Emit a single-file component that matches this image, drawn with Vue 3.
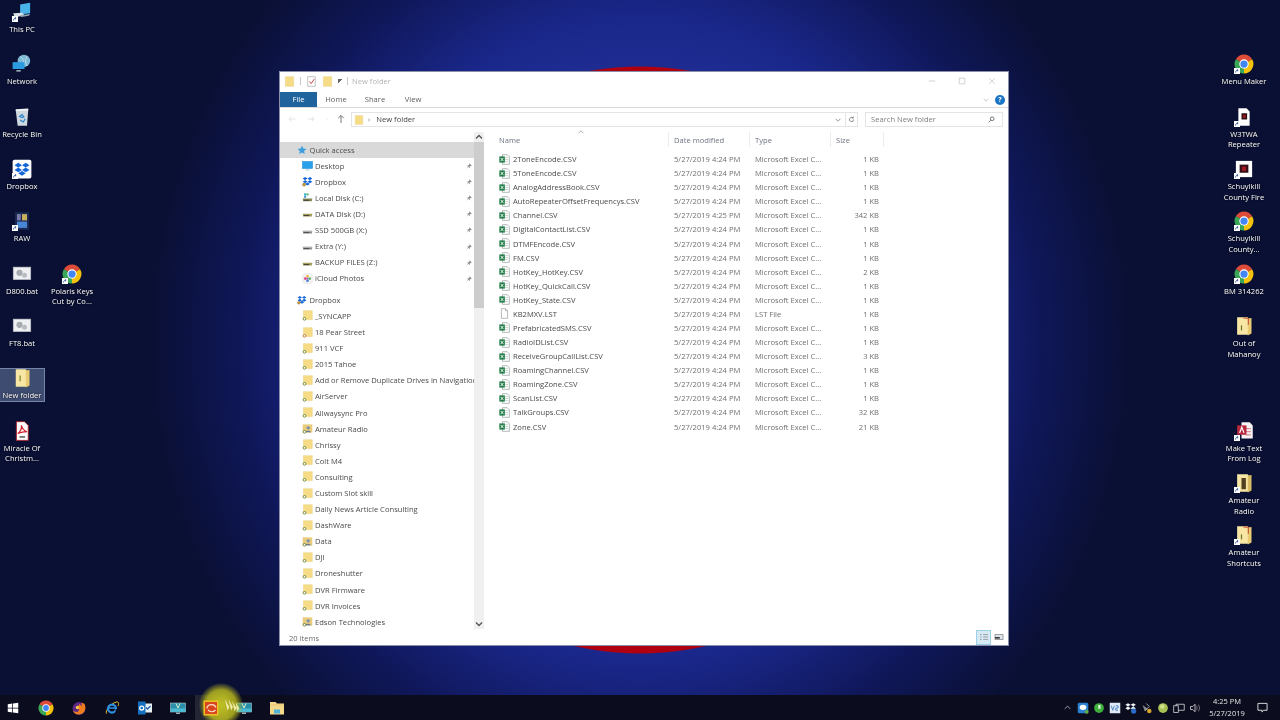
<template>
  <div class="desktop">
    <svg class="defs" aria-hidden="true">
      <symbol id="xl" viewBox="0 0 16 16">
        <path d="M5 1h7l3 3v11H5z" fill="#fff" stroke="#8f9a96" />
        <path d="M9 5h4M9 8h4M9 11h4" stroke="#b5c4bb" />
        <rect x="0.5" y="3.5" width="8" height="9" fill="#1d7a45" />
        <path d="M2.400 5.600l4.200 4.800M6.600 5.600l-4.200 4.800" stroke="#fff" stroke-width="1.300" />
      </symbol>
      <symbol id="blank" viewBox="0 0 16 16">
        <path d="M3.500 1h6l3 3v11h-9z" fill="#fff" stroke="#9a9a9a" />
        <path d="M9.500 1v3h3" fill="none" stroke="#9a9a9a" />
      </symbol>
      <symbol id="props" viewBox="0 0 16 16">
        <path d="M2.500 1h11v14h-11z" fill="#fff" stroke="#a8a8a8" />
        <path d="M5 8l2.500 3L12 4.500" fill="none" stroke="#c8343c" stroke-width="1.300" />
      </symbol>
      <symbol id="tfolder" viewBox="0 0 16 16">
        <path d="M2 1h12v14H2z" fill="#f6dc86" stroke="#e6cb78" stroke-width=".6" />
      </symbol>
      <symbol id="sfolder" viewBox="0 0 16 16">
        <path d="M2 1h13v13H2z" fill="#f6dc86" stroke="#e6cb78" stroke-width=".6" />
        <circle cx="3.600" cy="12.800" r="2" fill="#fff" stroke="#5f7d2b" stroke-width="1.200" />
      </symbol>
      <symbol id="ofolder" viewBox="0 0 16 16">
        <path d="M2 1h13v13H2z" fill="#f6dc86" stroke="#e6cb78" stroke-width=".6" />
        <circle cx="3.600" cy="12.800" r="2" fill="#fff" stroke="#b06a28" stroke-width="1.200" />
      </symbol>
      <symbol id="pfolder" viewBox="0 0 16 16">
        <path d="M1 2h14v12H1z" fill="#e8cc7c" />
        <circle cx="9" cy="7" r="2.400" fill="#7d8fb0" />
        <path d="M5 13.500c.6-3 7-3 8 0z" fill="#64769a" />
        <circle cx="3.600" cy="12.800" r="2" fill="#fff" stroke="#5f7d2b" stroke-width="1.200" />
      </symbol>
      <symbol id="star" viewBox="0 0 16 16">
        <path d="M8 1l2.100 4.700 5 .5-3.800 3.300 1.100 5L8 11.900l-4.400 2.600 1.100-5L.9 6.200l5-.5z" fill="#3c9ddc" />
      </symbol>
      <symbol id="screen" viewBox="0 0 16 16">
        <rect x="0.500" y="2" width="15" height="10.500" fill="#2aa0ea" stroke="#1d84c8" stroke-width=".6" />
        <path d="M5 14.500h6" stroke="#7fb2d2" />
      </symbol>
      <symbol id="dropboxnav" viewBox="0 0 32 32">
        <path d="M9 3l7 4.600-7 4.600-7-4.600zM23 3l7 4.600-7 4.600-7-4.600zM9 12.200l7 4.600-7 4.600-7-4.600zM23 12.200l7 4.600-7 4.600-7-4.600zM16 18.600l7 4.600-7 4.600-7-4.600z" fill="#1467d8" />
        <circle cx="6" cy="25" r="4.600" fill="#c89a3c" stroke="#6f5a22" />
      </symbol>
      <symbol id="drive" viewBox="0 0 16 16">
        <path d="M1 8.500h14l-.6 4H1.600z" fill="#8d8d8d" />
        <path d="M1.600 9h12.800" stroke="#d8d8d8" />
        <path d="M2.500 11h8" stroke="#444" stroke-width="1.300" />
      </symbol>
      <symbol id="sysdrive" viewBox="0 0 16 16">
        <rect x="3" y="2" width="3" height="3" fill="#2db2cf" />
        <rect x="6.500" y="2" width="3" height="3" fill="#4fb56d" />
        <rect x="3" y="5.400" width="3" height="3" fill="#3a94d6" />
        <path d="M1 9.500h14l-.6 4H1.600z" fill="#8a8a5a" />
        <path d="M2.500 12h8" stroke="#333" stroke-width="1.300" />
      </symbol>
      <symbol id="ydrive" viewBox="0 0 16 16">
        <path d="M1 8.500h14l-.6 4H1.600z" fill="#a39c5a" />
        <path d="M2.500 11h8" stroke="#333" stroke-width="1.300" />
      </symbol>
      <symbol id="icloud" viewBox="0 0 16 16">
        <rect x="1" y="1" width="14" height="14" rx="3" fill="#f4f4f6" stroke="#c9c9cf" stroke-width=".5" />
        <circle cx="8" cy="4.800" r="2" fill="#f0b43a" />
        <circle cx="11.200" cy="8" r="2" fill="#5cb85c" />
        <circle cx="8" cy="11.200" r="2" fill="#4a7fd6" />
        <circle cx="4.800" cy="8" r="2" fill="#d6487e" />
        <circle cx="8" cy="8" r="1.400" fill="#a76ad0" />
      </symbol>
      <symbol id="pin" viewBox="0 0 16 16">
        <path d="M9.500 1.500l5 5-2 .6-2.700 2.700-.4 3-5.700-5.700 3-.4 2.700-2.700zM5 11l-3.500 3.500" fill="#8a8a8a" stroke="#8a8a8a" />
      </symbol>
      <symbol id="chrome" viewBox="0 0 32 32">
        <path d="M16 16L3 8.500A15 15 0 0 1 29 8.500z" fill="#dd4b39" />
        <path d="M16 16L29 8.500A15 15 0 0 1 16 31z" fill="#f4c20d" />
        <path d="M16 16L16 31A15 15 0 0 1 3 8.500z" fill="#3aa757" />
        <circle cx="16" cy="16" r="7.500" fill="#fff" />
        <circle cx="16" cy="16" r="5.800" fill="#4285f4" />
      </symbol>
      <symbol id="thispc" viewBox="0 0 32 32">
        <path d="M13 4l16-3v17l-16 2z" fill="#49b4ea" />
        <path d="M2 18l14-1 5 5-17 2z" fill="#d9dfe4" />
        <path d="M13 21l16-2-2 3-12 2z" fill="#8fa7b6" />
      </symbol>
      <symbol id="network" viewBox="0 0 32 32">
        <circle cx="19" cy="11" r="10" fill="#7db9d6" />
        <path d="M13 4c4 2 8 9 5 16M24 3c-3 5-3 12 0 16" stroke="#d6ecf5" fill="none" />
        <path d="M1 13h19v11H1z" fill="#2c9be0" />
        <path d="M7 27h7" stroke="#c9d9e2" stroke-width="2" />
      </symbol>
      <symbol id="bin" viewBox="0 0 32 32">
        <path d="M6 5l20-1-2 26H9z" fill="#cfd8df" />
        <path d="M6 5l20-1" stroke="#f1f4f6" stroke-width="3" />
        <path d="M12 15l4-3 3 4-3 1zM13 21l5 3 3-5" fill="none" stroke="#2f86cc" stroke-width="2" />
      </symbol>
      <symbol id="dbox" viewBox="0 0 32 32">
        <rect x="1" y="1" width="30" height="30" rx="3" fill="#fff" />
        <path d="M10 6l6 3.800-6 3.800-6-3.800zM22 6l6 3.800-6 3.800-6-3.800zM10 13.700l6 3.800-6 3.800-6-3.800zM22 13.700l6 3.800-6 3.800-6-3.800zM16 19l6 3.800-6 3.800-6-3.800z" fill="#1467d8" />
      </symbol>
      <symbol id="raw" viewBox="0 0 32 32">
        <rect x="5" y="2" width="22" height="28" fill="#1d2a55" />
        <rect x="8" y="5" width="6" height="10" fill="#7a7aa8" />
        <rect x="16" y="5" width="8" height="10" fill="#c8b05a" />
        <rect x="8" y="17" width="16" height="10" fill="#4a86d6" />
      </symbol>
      <symbol id="bat" viewBox="0 0 32 32">
        <rect x="2" y="5" width="28" height="20" fill="#eef0f2" stroke="#b9bec4" />
        <circle cx="12" cy="14" r="5" fill="#a7abaf" />
        <circle cx="20" cy="18" r="4" fill="#b9bdc1" />
      </symbol>
      <symbol id="opened" viewBox="0 0 32 32">
        <path d="M6 2h16l2 3v25H6z" fill="#f7e6a4" />
        <path d="M22 4l6-1v25l-6 3z" fill="#e8cb73" />
        <path d="M13 12v9" stroke="#7f8a2a" stroke-width="2" />
      </symbol>
      <symbol id="redfolder" viewBox="0 0 32 32">
        <path d="M5 2h17l2 3v25H5z" fill="#f7e6a4" />
        <path d="M22 4l6-1v25l-6 3z" fill="#e8cb73" />
        <path d="M15 3l8 1v10" stroke="#c9603c" stroke-width="2" fill="none" />
        <path d="M12 15v8" stroke="#6e7a2a" stroke-width="2" />
      </symbol>
      <symbol id="darkfolder" viewBox="0 0 32 32">
        <path d="M5 2h17l2 3v25H5z" fill="#f7e6a4" />
        <path d="M22 4l6-1v25l-6 3z" fill="#d9bb66" />
        <path d="M12 8h7v18h-7z" fill="#50401f" />
      </symbol>
      <symbol id="page" viewBox="0 0 32 32">
        <path d="M7 2h13l5 5v23H7z" fill="#fff" />
        <rect x="12" y="10" width="9" height="10" fill="#301015" />
        <rect x="14.500" y="12.500" width="4" height="5" fill="#a01824" />
      </symbol>
      <symbol id="square" viewBox="0 0 32 32">
        <rect x="3" y="3" width="26" height="26" fill="#fff" />
        <rect x="9" y="9" width="14" height="13" fill="#301015" />
        <rect x="12.500" y="12" width="7" height="7" fill="#a01824" />
      </symbol>
      <symbol id="pdf" viewBox="0 0 32 32">
        <path d="M7 1h13l6 6v24H7z" fill="#fff" stroke="#a3202c" stroke-width="1.500" />
        <path d="M9 20c5-3 7-9 6-13 2 6 4 9 9 10-5 0-10 1-15 3z" fill="none" stroke="#d3202c" stroke-width="2" />
        <rect x="12" y="24" width="9" height="3" fill="#777" />
      </symbol>
      <symbol id="acc" viewBox="0 0 32 32">
        <path d="M12 2h13l5 5v21H12z" fill="#f7f2f3" />
        <path d="M19 12h8M19 17h8M19 22h8" stroke="#d98b96" stroke-width="2" />
        <rect x="5" y="7" width="15" height="15" fill="#b8283e" />
        <path d="M9 19l3.500-9 3.500 9" stroke="#fff" stroke-width="2" fill="none" />
      </symbol>
      <symbol id="shortcut" viewBox="0 0 8 8">
        <rect width="8" height="8" fill="#fff" />
        <path d="M2 6c0-2 1-3 3-3M3.800 1.500L5.500 3 3.800 4.500" stroke="#1b3f8a" fill="none" />
      </symbol>
      <symbol id="windows" viewBox="0 0 16 16">
        <path d="M1 3l6-.9V7.500H1zM8 2l7-1v6.500H8zM1 8.500h6v5.400l-6-.9zM8 8.500h7V15l-7-1z" fill="#fff" />
      </symbol>
      <symbol id="firefox" viewBox="0 0 32 32">
        <circle cx="16" cy="17" r="13" fill="#5a2a86" />
        <path d="M27 8c4 8 1 20-10 21-7 .5-12-3-13-8 3 3 8 4 11 1 2-2 1-5-2-5 0-3 3-5 3-9 3 1 4 3 5 5 1-2 0-5 0-7 3 0 5 1 6 2z" fill="#ef7b1f" />
        <circle cx="13" cy="15" r="3.500" fill="#f6c344" />
      </symbol>
      <symbol id="ie" viewBox="0 0 32 32">
        <path d="M5 27C2 21 13 7 25 4c5-1 5 4 3 8" fill="none" stroke="#f2c230" stroke-width="2" />
        <circle cx="16" cy="17" r="8" fill="none" stroke="#2f8fe0" stroke-width="4.500" />
        <path d="M9 16h15" stroke="#2f8fe0" stroke-width="3" />
        <path d="M23 21h3" stroke="#0b0c20" stroke-width="5" />
      </symbol>
      <symbol id="outlook" viewBox="0 0 32 32">
        <rect x="15" y="7" width="15" height="18" fill="#e6eef6" />
        <path d="M18 15l3 3 6-6" stroke="#1d5fa8" stroke-width="2.500" fill="none" />
        <rect x="2" y="3" width="15" height="26" fill="#1470bd" />
        <circle cx="9.500" cy="16" r="4" fill="none" stroke="#fff" stroke-width="2.500" />
      </symbol>
      <symbol id="monitor" viewBox="0 0 32 32">
        <rect x="1" y="6" width="30" height="18" fill="#2a8fa8" stroke="#c8dce2" />
        <path d="M1 17h30v7H1z" fill="#4fb9d0" />
        <path d="M12 7l4 9 4-9" stroke="#d9f0d0" stroke-width="2" fill="none" />
        <path d="M12 25h8v3h-8z" fill="#9ab3bb" />
      </symbol>
      <symbol id="orange" viewBox="0 0 32 32">
        <rect x="1" y="1" width="30" height="30" fill="#f0c020" />
        <rect x="4" y="4" width="24" height="24" fill="#d8451e" />
        <path d="M8 17c0-9 15-11 18-2M10 20c4 4 10 5 15 0" stroke="#f8e0c8" stroke-width="2.500" fill="none" />
      </symbol>
      <symbol id="explorer" viewBox="0 0 32 32">
        <path d="M2 4h11l3 3h14v22H2z" fill="#f5d98a" />
        <path d="M2 10h28" stroke="#d8b560" />
        <rect x="10" y="19" width="12" height="8" fill="#4fb2d6" />
      </symbol>
      <symbol id="trayblue" viewBox="0 0 16 16">
        <rect x="1" y="1" width="14" height="14" rx="2" fill="#2a80d0" />
        <path d="M3.500 7a4.500 3.500 0 0 1 9 0 4.500 3.500 0 0 1-9 0" fill="#fff" />
        <circle cx="13" cy="13" r="2.500" fill="#62b23c" />
      </symbol>
      <symbol id="traygreen" viewBox="0 0 16 16">
        <circle cx="8" cy="8" r="6.500" fill="#3fae3a" />
        <path d="M7 4h3v5H7z" fill="#e6f6e0" />
      </symbol>
      <symbol id="trayv" viewBox="0 0 16 16">
        <rect x="1" y="1" width="14" height="14" fill="#dfe9f5" />
        <path d="M3 5l2 6 2-6M9 5h3v3H9v3h3" stroke="#2a6cb8" fill="none" />
      </symbol>
      <symbol id="traydrop" viewBox="0 0 32 32">
        <path d="M8 3l7 4.600-7 4.600-7-4.600zM22 3l7 4.600-7 4.600-7-4.600zM8 12.200l7 4.600-7 4.600-7-4.600zM22 12.200l7 4.600-7 4.600-7-4.600z" fill="#eef2f6" />
        <circle cx="23" cy="24" r="7" fill="#2a6cc8" />
      </symbol>
      <symbol id="traysat" viewBox="0 0 16 16">
        <path d="M2 4l7 5-4 3z" fill="#8a8a8a" />
        <path d="M7 2l4 4-6 6" stroke="#ccc" fill="none" />
        <circle cx="11" cy="12" r="3" fill="#d8a42c" />
      </symbol>
      <symbol id="traylime" viewBox="0 0 16 16">
        <circle cx="8" cy="8" r="6.500" fill="#a9c255" />
        <circle cx="7" cy="6" r="3" fill="#d2e08c" />
      </symbol>
      <symbol id="traynet" viewBox="0 0 16 16">
        <path d="M4 3h11v8H4z" fill="none" stroke="#e5e5e5" />
        <rect x="1" y="5" width="6" height="9" fill="#0b0c20" stroke="#e5e5e5" />
      </symbol>
      <symbol id="traysound" viewBox="0 0 16 16">
        <path d="M2 6h3l3-3v10l-3-3H2z" fill="none" stroke="#e5e5e5" />
        <path d="M10 5c1 2 1 4 0 6M12.500 3.500c2 3 2 6 0 9" stroke="#8f8f8f" fill="none" />
      </symbol>
    </svg>

    <div v-for="item in desktopIcons" :key="item.label" class="desk-icon" :class="{ 'desk-icon--selected': item.selected }" :style="deskStyle(item)">
      <span class="desk-icon__art">
        <svg class="desk-icon__svg"><use :href="`#${item.icon}`" /></svg>
        <svg v-if="item.link" class="desk-icon__link"><use href="#shortcut" /></svg>
      </span>
      <span class="desk-icon__label">{{ item.label }}</span>
    </div>

    <section class="window">
      <header class="titlebar">
        <svg class="tb-ic"><use href="#tfolder" /></svg>
        <span class="tb-sep"></span>
        <svg class="tb-ic"><use href="#props" /></svg>
        <svg class="tb-ic"><use href="#tfolder" /></svg>
        <span class="tb-caret"></span>
        <span class="tb-sep"></span>
        <span class="titlebar__name">New folder</span>
        <div class="controls">
          <svg viewBox="0 0 10 10"><path d="M1 5h8" /></svg>
          <svg viewBox="0 0 10 10"><path d="M1.500 1.500h7v7h-7z" /></svg>
          <svg viewBox="0 0 10 10"><path d="M1.500 1.500l7 7M8.500 1.500l-7 7" /></svg>
        </div>
      </header>

      <nav class="tabs">
        <span class="tabs__file">File</span>
        <span class="tabs__tab tabs__tab--home">Home</span>
        <span class="tabs__tab tabs__tab--share">Share</span>
        <span class="tabs__tab tabs__tab--view">View</span>
        <svg class="tabs__collapse" viewBox="0 0 10 6"><path d="M1 1l4 4 4-4" /></svg>
        <span class="tabs__help">?</span>
      </nav>

      <div class="addressrow">
        <svg class="arrow arrow--back" viewBox="0 0 12 10"><path d="M11 5H2M5 1.500L1.500 5 5 8.500" /></svg>
        <svg class="arrow arrow--forward" viewBox="0 0 12 10"><path d="M1 5h9M7 1.500L10.500 5 7 8.500" /></svg>
        <svg class="caret" viewBox="0 0 10 6"><path d="M2 1.500l3 3 3-3" /></svg>
        <svg class="arrow arrow--up" viewBox="0 0 10 12"><path d="M5 11V2M1.500 5L5 1.500 8.500 5" /></svg>
        <div class="address">
          <svg class="address__ic"><use href="#tfolder" /></svg>
          <span class="address__chev">›</span>
          <span class="address__path">New folder</span>
          <svg class="address__down" viewBox="0 0 10 6"><path d="M1 1l4 4 4-4" /></svg>
          <span class="address__refresh">
            <svg viewBox="0 0 10 10"><path d="M8 5a3 3 0 1 1-1-2.300M7.500 .8v2.200H5.300" /></svg>
          </span>
        </div>
        <div class="search">
          <span class="search__text">Search New folder</span>
          <svg viewBox="0 0 10 10"><circle cx="6" cy="4" r="2.600" /><path d="M4 6L1 9" /></svg>
        </div>
      </div>

      <div class="body">
        <aside class="tree">
          <div v-for="row in treeRows" :key="row.name" class="tree__row" :class="{ 'tree__row--head': row.head, 'tree__row--active': row.active, 'tree__row--gap': row.gap }">
            <svg class="tree__ic"><use :href="`#${row.icon}`" /></svg>
            <span class="tree__name">{{ row.name }}</span>
            <svg v-if="row.pin" class="tree__pin"><use href="#pin" /></svg>
          </div>
        </aside>

        <div class="scrollbar">
          <svg viewBox="0 0 10 10" class="scrollbar__btn"><path d="M2 6.500l3-3 3 3" /></svg>
          <div class="scrollbar__track"><div class="scrollbar__thumb"></div></div>
          <svg viewBox="0 0 10 10" class="scrollbar__btn"><path d="M2 3.500l3 3 3-3" /></svg>
        </div>

        <main class="files">
          <svg class="files__sort" viewBox="0 0 10 5"><path d="M2 4l3-3 3 3" /></svg>
          <div class="files__head">
            <span>Name</span>
            <span>Date modified</span>
            <span>Type</span>
            <span>Size</span>
          </div>
          <div v-for="file in files" :key="file.name" class="files__row">
            <span class="files__name">
              <svg><use :href="file.lst ? '#blank' : '#xl'" /></svg>{{ file.name }}
            </span>
            <span>{{ file.date }}</span>
            <span>{{ file.lst ? 'LST File' : 'Microsoft Excel C...' }}</span>
            <span class="files__size">{{ file.size }}</span>
          </div>
        </main>
      </div>

      <footer class="status">
        <span class="status__count">20 items</span>
        <div class="status__views">
          <span class="status__view status__view--on">
            <svg viewBox="0 0 12 10"><path d="M1 2h2M5 2h6M1 5h2M5 5h6M1 8h2M5 8h6" /></svg>
          </span>
          <span class="status__view">
            <svg viewBox="0 0 12 10"><rect x="1" y="2" width="10" height="6" fill="#dce6ee" /><path d="M1 6h6" stroke="#333" stroke-width="2" /></svg>
          </span>
        </div>
      </footer>
    </section>

    <footer class="taskbar">
      <span v-for="(app, i) in taskApps" :key="i" class="taskbar__app" :class="{ 'taskbar__app--active': app.active }">
        <svg :class="{ 'taskbar__win': app.icon === 'windows' }"><use :href="`#${app.icon}`" /></svg>
      </span>
      <div class="tray">
        <svg class="tray__chev" viewBox="0 0 10 6"><path d="M1 5l4-4 4 4" /></svg>
        <svg v-for="icon in trayIcons" :key="icon" class="tray__ic"><use :href="`#${icon}`" /></svg>
        <div class="clock">
          <span>4:25 PM</span>
          <span>5/27/2019</span>
        </div>
        <svg class="tray__note" viewBox="0 0 12 12"><path d="M1 1.500h10v7.500H7L5.500 11V9H1z" /></svg>
      </div>
    </footer>

    <div class="pointer">
      <svg viewBox="0 0 20 20"><path d="M2 1l3 13 2-4zM6 1l3 13 2-4zM10 3l3 12 2-4zM14 5l2 10 2-4z" fill="#efeba8" /></svg>
    </div>
  </div>
</template>

<script setup>
const ROW = 52.33

const desktopIcons = [
  { col: 22, row: 0, label: 'This PC', icon: 'thispc', link: true },
  { col: 22, row: 1, label: 'Network', icon: 'network' },
  { col: 22, row: 2, label: 'Recycle Bin', icon: 'bin' },
  { col: 22, row: 3, label: 'Dropbox', icon: 'dbox', link: true },
  { col: 22, row: 4, label: 'RAW', icon: 'raw', link: true },
  { col: 22, row: 5, label: 'D800.bat', icon: 'bat' },
  { col: 72, row: 5, label: 'Polaris Keys Cut by Co...', icon: 'chrome', link: true },
  { col: 22, row: 6, label: 'FT8.bat', icon: 'bat' },
  { col: 22, row: 7, label: 'New folder', icon: 'opened', selected: true },
  { col: 22, row: 8, label: 'Miracle Of Christm...', icon: 'pdf' },
  { col: 1244, row: 1, label: 'Menu Maker', icon: 'chrome', link: true },
  { col: 1244, row: 2, label: 'W3TWA Repeater', icon: 'page', link: true },
  { col: 1244, row: 3, label: 'Schuylkill County Fire', icon: 'square', link: true },
  { col: 1244, row: 4, label: 'Schuylkill County...', icon: 'chrome', link: true },
  { col: 1244, row: 5, label: 'BM 314262', icon: 'chrome', link: true },
  { col: 1244, row: 6, label: 'Out of Mahanoy', icon: 'redfolder' },
  { col: 1244, row: 8, label: 'Make Text From Log', icon: 'acc', link: true },
  { col: 1244, row: 9, label: 'Amateur Radio', icon: 'darkfolder', link: true },
  { col: 1244, row: 10, label: 'Amateur Shortcuts', icon: 'redfolder', link: true },
]

function deskStyle(item) {
  return { left: `${item.col - 24}px`, top: `${2 + item.row * ROW}px` }
}

const dropboxFolders = [
  ['_SYNCAPP', 'sfolder'], ['18 Pear Street', 'ofolder'], ['911 VCF', 'sfolder'], ['2015 Tahoe', 'sfolder'],
  ['Add or Remove Duplicate Drives in Navigation', 'sfolder'], ['AirServer', 'sfolder'], ['Allwaysync Pro', 'sfolder'],
  ['Amateur Radio', 'pfolder'], ['Chrissy', 'sfolder'], ['Colt M4', 'sfolder'], ['Consulting', 'sfolder'],
  ['Custom Slot skill', 'sfolder'], ['Daily News Article Consulting', 'sfolder'], ['DashWare', 'sfolder'],
  ['Data', 'pfolder'], ['DJI', 'sfolder'], ['Droneshutter', 'sfolder'], ['DVR Firmware', 'sfolder'],
  ['DVR Invoices', 'sfolder'], ['Edson Technologies', 'pfolder'],
]

const treeRows = [
  { name: 'Quick access', icon: 'star', head: true, active: true },
  { name: 'Desktop', icon: 'screen', pin: true },
  { name: 'Dropbox', icon: 'dropboxnav', pin: true },
  { name: 'Local Disk (C:)', icon: 'sysdrive', pin: true },
  { name: 'DATA Disk (D:)', icon: 'ydrive', pin: true },
  { name: 'SSD 500GB (X:)', icon: 'drive', pin: true },
  { name: 'Extra (Y:)', icon: 'drive', pin: true },
  { name: 'BACKUP FILES (Z:)', icon: 'ydrive', pin: true },
  { name: 'iCloud Photos', icon: 'icloud', pin: true },
  { name: 'Dropbox ', icon: 'dropboxnav', head: true, gap: true },
  ...dropboxFolders.map(([name, icon]) => ({ name, icon })),
]

const files = [
  ['2ToneEncode.CSV', '1 KB'], ['5ToneEncode.CSV', '1 KB'], ['AnalogAddressBook.CSV', '1 KB'],
  ['AutoRepeaterOffsetFrequencys.CSV', '1 KB'], ['Channel.CSV', '342 KB', '4:25'], ['DigitalContactList.CSV', '1 KB'],
  ['DTMFEncode.CSV', '1 KB'], ['FM.CSV', '1 KB'], ['HotKey_HotKey.CSV', '2 KB'], ['HotKey_QuickCall.CSV', '1 KB'],
  ['HotKey_State.CSV', '1 KB'], ['KB2MXV.LST', '1 KB'], ['PrefabricatedSMS.CSV', '1 KB'], ['RadioIDList.CSV', '1 KB'],
  ['ReceiveGroupCallList.CSV', '3 KB'], ['RoamingChannel.CSV', '1 KB'], ['RoamingZone.CSV', '1 KB'],
  ['ScanList.CSV', '1 KB'], ['TalkGroups.CSV', '32 KB'], ['Zone.CSV', '21 KB'],
].map(([name, size, time]) => ({
  name,
  size,
  date: `5/27/2019 ${time || '4:24'} PM`,
  lst: name.endsWith('.LST'),
}))

const taskApps = [
  { icon: 'windows' }, { icon: 'chrome' }, { icon: 'firefox' }, { icon: 'ie' }, { icon: 'outlook' },
  { icon: 'monitor' }, { icon: 'orange', active: true }, { icon: 'monitor' }, { icon: 'explorer' },
]

const trayIcons = ['trayblue', 'traygreen', 'trayv', 'traydrop', 'traysat', 'traylime', 'traynet', 'traysound']
</script>

<style>
html,
body {
  margin: 0;
  background: #0a0e2e;
}
</style>

<style scoped>
.desktop {
  position: relative;
  width: 1280px;
  height: 720px;
  overflow: hidden;
  font-family: "Open Sans", "Noto Sans", sans-serif;
  font-size: 7.6px;
  color: #4a4a4a;
  filter: blur(0.3px);
  background:
    radial-gradient(circle 294px at 640px 360px, #b00010 99.6%, transparent 100%),
    radial-gradient(ellipse 490px 520px at 640px 340px, #2c3ca4 0, #24339c 40%, #1a278a 62%, #0f1758 82%, #0a1034 100%),
    #0a1034;
}

.defs {
  position: absolute;
  width: 0;
  height: 0;
}

.desk-icon {
  position: absolute;
  width: 48px;
  height: 46px;
  display: flex;
  flex-direction: column;
  align-items: center;
  color: #fff;
  text-align: center;
  line-height: 10.6px;
  text-shadow: 0 0 2px #000;
}

.desk-icon--selected::before {
  content: "";
  position: absolute;
  left: -2px;
  right: 1px;
  top: 0;
  bottom: 12px;
  background: rgba(136, 160, 200, 0.42);
  border: 1px solid rgba(170, 190, 220, 0.5);
}

.desk-icon__art {
  position: relative;
  width: 20px;
  height: 20px;
  margin-bottom: 2px;
}

.desk-icon__svg {
  width: 20px;
  height: 20px;
  display: block;
}

.desk-icon__link {
  position: absolute;
  left: 0;
  bottom: 0;
  width: 6px;
  height: 6px;
}

.desk-icon__label {
  position: relative;
}

.window {
  position: absolute;
  left: 279px;
  top: 71px;
  width: 728px;
  height: 573px;
  display: flex;
  flex-direction: column;
  background: #fff;
  border: 1px solid #8b8fa8;
}

.titlebar {
  height: 20px;
  flex: none;
  box-sizing: border-box;
  padding: 0 0 2px 4px;
  display: flex;
  align-items: center;
  gap: 3px;
}

.tb-ic {
  width: 11px;
  height: 11px;
}

.tb-ic + .tb-ic {
  margin-left: 2px;
}

.tb-sep {
  width: 1px;
  height: 8px;
  margin: 0 2px;
  background: #c8c8c8;
}

.tb-caret {
  width: 4px;
  height: 4px;
  margin-left: 2px;
  border-top: 1px solid #666;
  background: linear-gradient(135deg, #666 50%, transparent 50%);
}

.titlebar__name {
  color: #b4b4b4;
  margin-left: -1px;
}

.controls {
  margin-left: auto;
  display: flex;
  gap: 22px;
  padding-right: 12px;
}

.controls svg {
  width: 8px;
  height: 8px;
  fill: none;
  stroke: #b9b9b9;
  stroke-width: 0.8;
}

.tabs {
  position: relative;
  height: 15px;
  flex: none;
  display: flex;
  align-items: center;
  border-bottom: 1px solid #dadbdc;
}

.tabs__file {
  width: 37px;
  height: 100%;
  box-sizing: border-box;
  padding-bottom: 2px;
  display: flex;
  align-items: center;
  justify-content: center;
  background: #20649e;
  color: #fff;
}

.tabs__tab {
  position: absolute;
  top: 50%;
  transform: translate(-50%, -62%);
  color: #5f5f5f;
}

.tabs__tab--home {
  left: 56px;
}

.tabs__tab--share {
  left: 95px;
}

.tabs__tab--view {
  left: 133px;
}

.tabs__collapse {
  margin-left: auto;
  width: 6px;
  height: 4px;
  fill: none;
  stroke: #aaa;
}

.tabs__help {
  width: 10px;
  height: 10px;
  margin: 0 3px 0 6px;
  border-radius: 50%;
  background: #1c74c4;
  color: #fff;
  font-size: 7px;
  font-weight: 700;
  line-height: 10px;
  text-align: center;
}

.addressrow {
  height: 24px;
  flex: none;
  box-sizing: border-box;
  display: flex;
  align-items: flex-start;
  padding-top: 4px;
}

.arrow {
  width: 8px;
  height: 14px;
  fill: none;
  stroke: #d6d6d6;
  stroke-width: 1;
}

.arrow--back {
  margin-left: 8px;
}

.arrow--forward {
  margin-left: 11px;
}

.caret {
  width: 5px;
  height: 14px;
  margin-left: 9.500px;
  fill: none;
  stroke: #e0e0e0;
}

.arrow--up {
  margin: 0 6px 0 7.500px;
  stroke: #555;
}

.address {
  flex: none;
  width: 505px;
  height: 13px;
  display: flex;
  align-items: center;
  border: 1px solid #e4e4e4;
}

.address__ic {
  width: 10px;
  height: 12px;
  margin-left: 2px;
}

.address__chev {
  margin: 0 0 2px 4px;
  color: #777;
}

.address__path {
  margin: 0 0 2px 6px;
  color: #444;
}

.address__down {
  margin-left: auto;
  width: 6px;
  height: 4px;
  fill: none;
  stroke: #555;
}

.address__refresh {
  margin-left: 4px;
  width: 11px;
  height: 13px;
  display: flex;
  align-items: center;
  justify-content: center;
  border-left: 1px solid #e4e4e4;
}

.address__refresh svg {
  width: 7px;
  height: 7px;
  fill: none;
  stroke: #666;
}

.search {
  flex: none;
  width: 124px;
  height: 13px;
  margin-left: 7px;
  display: flex;
  align-items: center;
  justify-content: space-between;
  padding: 0 7px 0 5px;
  border: 1px solid #e4e4e4;
  color: #808080;
}

.search__text {
  margin-bottom: 2px;
}

.search svg {
  width: 7px;
  height: 7px;
  fill: none;
  stroke: #444;
}

.body {
  flex: 1;
  min-height: 0;
  display: flex;
}

.tree {
  width: 194px;
  flex: none;
  box-sizing: border-box;
  padding-top: 10px;
  overflow: hidden;
}

.tree__row {
  position: relative;
  height: 16.100px;
  box-sizing: border-box;
  padding: 0 0 1px 22px;
  display: flex;
  align-items: center;
  white-space: nowrap;
}

.tree__row--head {
  padding-left: 17px;
}

.tree__row--active {
  background: #d9d9d9;
}

.tree__row--gap {
  margin-top: 5.500px;
}

.tree__ic {
  width: 11px;
  height: 11px;
  flex: none;
  margin-right: 2px;
}

.tree__row--head .tree__ic {
  width: 10px;
  height: 10px;
  margin-right: 2.500px;
}

.tree__pin {
  position: absolute;
  right: 2px;
  top: 5px;
  width: 6px;
  height: 6px;
}

.scrollbar {
  width: 10px;
  flex: none;
  display: flex;
  flex-direction: column;
  background: #f0f0f0;
}

.scrollbar__btn {
  width: 10px;
  height: 10px;
  flex: none;
  fill: none;
  stroke: #555;
  stroke-width: 1.300;
}

.scrollbar__track {
  flex: 1;
}

.scrollbar__thumb {
  height: 166px;
  background: #cdcdcd;
}

.files {
  position: relative;
  flex: 1;
  padding-left: 10px;
  color: #707070;
}

.files__sort {
  position: absolute;
  left: 93px;
  top: -2px;
  width: 8px;
  height: 4px;
  fill: none;
  stroke: #999;
}

.files__head,
.files__row {
  display: grid;
  grid-template-columns: 175px 81px 81px 53px;
  width: 390px;
}

.files__head {
  height: 15px;
  align-items: center;
  margin-bottom: 5px;
  color: #6d7480;
}

.files__head span {
  height: 100%;
  padding-left: 5px;
  display: flex;
  align-items: center;
  border-right: 1px solid #ececec;
}

.files__row {
  height: 14.080px;
  align-items: center;
  white-space: nowrap;
}

.files__row > span {
  padding-left: 5px;
}

.files__name {
  display: flex;
  align-items: center;
  color: #4a4a4a;
}

.files__name svg {
  width: 11px;
  height: 11px;
  margin-right: 3px;
}

.files .files__size {
  padding-right: 5px;
  text-align: right;
}

.status {
  height: 16px;
  flex: none;
  display: flex;
  align-items: center;
  justify-content: space-between;
  padding-left: 9px;
  color: #6a6a6a;
}

.status__count {
  margin-top: 1px;
}

.status__views {
  display: flex;
  align-items: center;
  padding-right: 2px;
}

.status__view {
  width: 15px;
  height: 15px;
  display: flex;
  align-items: center;
  justify-content: center;
  box-sizing: border-box;
}

.status__view svg {
  width: 10px;
  height: 8px;
  fill: none;
  stroke: #8a8a8a;
}

.status__view--on {
  background: #d6eaf5;
  border: 1px solid #9cd0e8;
}

.taskbar {
  position: absolute;
  left: 0;
  right: 0;
  bottom: 0;
  height: 25px;
  display: flex;
  align-items: stretch;
  padding-left: 29.500px;
  background: #0b0c1e;
}

.taskbar__app {
  flex: none;
  width: 33px;
  display: flex;
  align-items: center;
  justify-content: center;
}

.taskbar__app:first-child {
  margin: 0 3.500px 0 -29.500px;
  width: 26px;
}

.taskbar__app svg {
  width: 16px;
  height: 16px;
}

.taskbar__app--active {
  background: rgba(255, 255, 255, 0.1);
}

.taskbar__app--active svg {
  position: relative;
  z-index: 2;
}

.taskbar__app .taskbar__win {
  width: 12px;
  height: 12px;
}

.tray {
  margin-left: auto;
  display: flex;
  align-items: center;
  gap: 4px;
  color: #e5e5e5;
}

.tray__chev {
  width: 7px;
  height: 5px;
  margin-right: 2px;
  fill: none;
  stroke: #ddd;
}

.tray__ic {
  width: 12px;
  height: 12px;
}

.clock {
  width: 44px;
  display: flex;
  flex-direction: column;
  align-items: center;
  line-height: 11.500px;
  font-size: 7.500px;
}

.tray__note {
  width: 11px;
  height: 11px;
  margin: 0 12px 0 4px;
  fill: none;
  stroke: #e5e5e5;
}

.pointer {
  position: absolute;
  z-index: 1;
  left: 199px;
  top: 683px;
  width: 44px;
  height: 44px;
  border-radius: 50%;
  background: radial-gradient(circle, rgba(205, 205, 35, 0.92) 0, rgba(190, 190, 30, 0.82) 48%, rgba(150, 150, 20, 0) 72%);
}

.pointer svg {
  position: absolute;
  left: 24px;
  top: 15px;
  width: 18px;
  height: 18px;
}
</style>
